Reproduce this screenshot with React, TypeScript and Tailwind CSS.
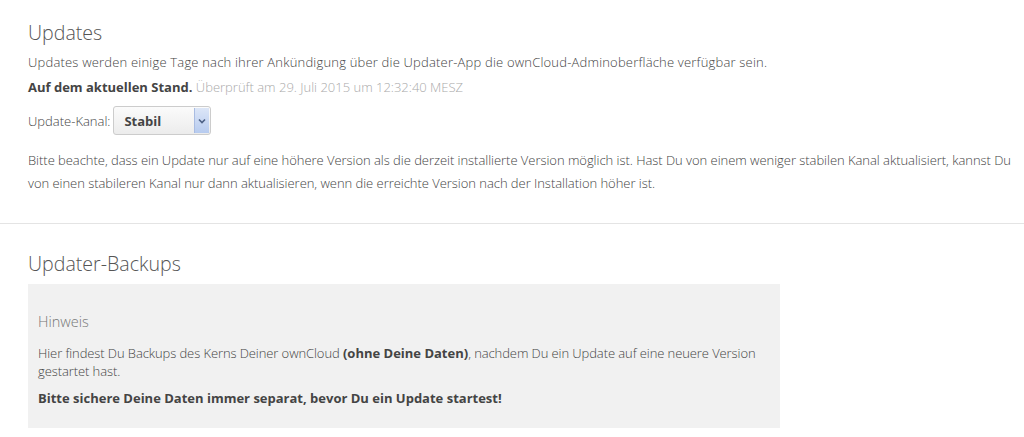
export default function App() {
  return (
    <div className="w-[1024px] h-[437px] overflow-hidden bg-white text-[13px] font-light text-[#444] leading-[18px]" style={{ fontFamily: '"Open Sans", "Liberation Sans", sans-serif' }}>
      <div className="pl-[28px] pr-[6px] pt-[19px] pb-[28px]">
        <h2 className="text-[19.6px] leading-[28px] text-[#555] font-light mb-[6px]">Updates</h2>
        <p className="mb-[7px] tracking-[0.19px]">Updates werden einige Tage nach ihrer Ankündigung über die Updater-App die ownCloud-Adminoberfläche verfügbar sein.</p>
        <p className="mb-[10px]"><strong className="font-bold text-[#444]">Auf dem aktuellen Stand.</strong> <span className="text-[#aaa]">Überprüft am 29. Juli 2015 um 12:32:40 MESZ</span></p>
        <div className="flex items-center gap-[3px] mb-[14px]">
          <span>Update-Kanal:</span>
          <div className="flex items-stretch h-[29px] w-[98px] border border-[#ccc] rounded-[3px] bg-gradient-to-b from-[#fbfbfb] to-[#ececec]">
            <span className="flex-1 flex items-center pl-[10px] font-bold text-[#444]">Stabil</span>
            <span className="w-[15px] my-[1px] mr-[1px] flex items-center justify-center bg-gradient-to-b from-[#dce6f7] to-[#b7cbef] border-l border-[#a9bce2]">
              <svg width="8" height="6" viewBox="0 0 8 6"><path d="M1 1.5 L4 4.5 L7 1.5" fill="none" stroke="#4d6185" strokeWidth="1.6" /></svg>
            </span>
          </div>
        </div>
        <p className="leading-[23px] tracking-[-0.04px]">Bitte beachte, dass ein Update nur auf eine höhere Version als die derzeit installierte Version möglich ist. Hast Du von einem weniger stabilen Kanal aktualisiert, kannst Du von einen stabileren Kanal nur dann aktualisieren, wenn die erreichte Version nach der Installation höher ist.</p>
      </div>
      <div className="border-t border-[#e4e4e4]" />
      <div className="px-[28px] pt-[26px]">
        <h2 className="text-[19.6px] leading-[28px] text-[#555] font-light mb-[6px]">Updater-Backups</h2>
        <div className="w-[752px] bg-[#f1f1f1] pl-[10px] pr-[4px] pt-[27px] pb-[21px]">
          <h3 className="text-[14.5px] leading-[22px] text-[#777] font-light mb-[11px]">Hinweis</h3>
          <p className="mb-[9px] tracking-[-0.09px]">Hier findest Du Backups des Kerns Deiner ownCloud <strong className="font-bold text-[#444] tracking-normal">(ohne Deine Daten)</strong>, nachdem Du ein Update auf eine neuere Version gestartet hast.</p>
          <p><strong className="font-bold text-[#444]">Bitte sichere Deine Daten immer separat, bevor Du ein Update startest!</strong></p>
        </div>
      </div>
    </div>
  );
}
